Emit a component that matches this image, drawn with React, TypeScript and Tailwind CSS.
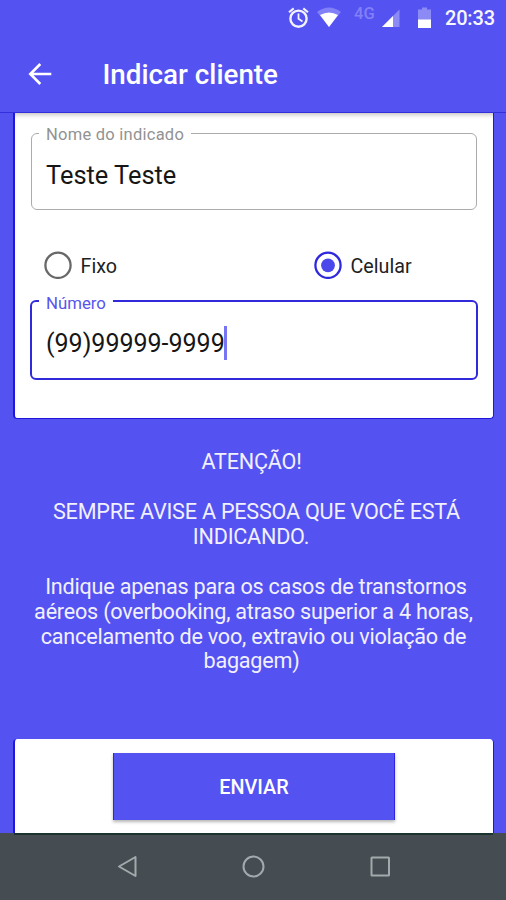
import React from "react";

function StatusBar() {
  return (
    <div className="flex h-[37px] w-full shrink-0 text-white">
      <svg width="506" height="37" viewBox="0 0 506 37" fill="none">
        <circle cx="298.5" cy="18.7" r="8.1" stroke="#f2f2ff" strokeWidth="2.4" />
        <path d="M298.5 13.5v5.3l4 2.6" stroke="#f2f2ff" strokeWidth="1.8" />
        <path d="M289 12.2l4.7-3.8M308 12.2l-4.7-3.8" stroke="#f2f2ff" strokeWidth="2.1" />
        <path d="M317 12Q329 3 341 12L329 27Z" fill="#8280f7" />
        <path d="M320 15Q329 10 338 15L329 27Z" fill="#fff" />
        <path d="M399.5 9.5V27H382Z" fill="#8c8bf6" />
        <path d="M393 16V27H382Z" fill="#fff" />
        <path d="M418 9.5h4V7.5h5v2h4V20h-13Z" fill="#8c8bf6" />
        <path d="M418 19.5h13V28h-13Z" fill="#fff" />
        <text x="354" y="19" fill="#8280f7" fontFamily="Roboto, sans-serif" fontSize="16.5" fontWeight="500">4G</text>
        <text x="445" y="25" fill="#f7f7ff" fontFamily="Roboto, sans-serif" fontSize="20" fontWeight="500" textLength="50">20:33</text>
      </svg>
    </div>
  );
}

function Header() {
  return (
    <header className="flex h-[75px] shrink-0 items-center pl-[28px]">
      <svg className="-mt-[2px]" width="24" height="24" viewBox="0 0 24 24" fill="none" stroke="white" strokeWidth="2.6">
        <path d="M23.3 12H2.5M12.3 2L2.3 12l10 10" />
      </svg>
      <h1 className="ml-[50.5px] text-[27.8px] font-medium leading-[32px] text-white">Indicar cliente</h1>
    </header>
  );
}

function Radio({ label, checked = false }: { label: string; checked?: boolean }) {
  return (
    <div className="flex w-[270px] shrink-0 items-center">
      <svg width="28" height="28" viewBox="0 0 28 28" fill="none">
        <circle cx="14" cy="14.3" r="12.6" stroke={checked ? "#2f28dc" : "#686868"} strokeWidth="2.3" />
        {checked && <circle cx="14" cy="14.3" r="6.9" fill="#4a48eb" />}
      </svg>
      <span className="ml-[8.5px] mt-[3px] text-[19.7px] leading-6 text-[#222]">{label}</span>
    </div>
  );
}

export default function App() {
  return (
    <div className="flex h-[900px] w-[506px] flex-col overflow-hidden bg-[#5552f2] font-[Roboto,sans-serif]">
      <StatusBar />
      <Header />
      <div className="h-px shrink-0 bg-[#342fdc]" />
      <section className="ml-[13px] mr-[12px] flex h-[306px] shrink-0 flex-col rounded-b-[4px] border-b border-l-2 border-r border-[#2017db] bg-white px-[15px] shadow-[inset_0_5px_4px_-3px_#c9c5c5]">
        <fieldset className="mx-px mt-[10px] h-[87px] rounded-[6px] border-[1.5px] border-[#ababab] pl-[7px]">
          <legend className="h-[20px] px-[7px] text-[16.5px] leading-[23px] tracking-[0.25px] text-[#929292]">Nome do indicado</legend>
          <p className="pl-[7px] pt-[17px] text-[25.4px] leading-[30px] text-[#161616]">Teste Teste</p>
        </fieldset>
        <div className="ml-[14px] mt-[41px] flex h-[28px] items-center">
          <Radio label="Fixo" />
          <Radio label="Celular" checked />
        </div>
        <fieldset className="mt-[12px] h-[89px] rounded-[6px] border-2 border-[#302adb] pl-[7px]">
          <legend className="h-[20px] px-[7px] text-[16.8px] leading-[25px] text-[#5855ed]">Número</legend>
          <div className="flex items-center pl-[7px] pt-[14px]">
            <p className="pt-[2px] text-[25px] leading-[34px] text-[#161616]">(99)99999-9999</p>
            <span className="-ml-px h-[34px] w-[3px] bg-[#7875f3]" />
          </div>
        </fieldset>
      </section>
      <section className="mt-[31px] h-[289px] shrink-0 text-center text-[21.6px] leading-[24.9px] tracking-[-0.22px] text-[#f1f0ff]">
        <p className="pr-[3px]">ATENÇÃO!</p>
        <p className="mt-[25px]"><span className="pl-[7px]">SEMPRE AVISE A PESSOA QUE VOCÊ ESTÁ</span><br /><span className="pr-[4px]">INDICANDO.</span></p>
        <p className="mt-[25px]"><span className="pl-[6px]">Indique apenas para os casos de transtornos</span><br /><span className="pl-px">aéreos (overbooking, atraso superior a 4 horas,</span><br /><span className="pl-px">cancelamento de voo, extravio ou violação de</span><br /><span className="pr-[3px]">bagagem)</span></p>
      </section>
      <section className="ml-[13px] mr-[12px] flex h-[94px] shrink-0 justify-center rounded-t-[4px] border-l-2 border-r border-[#2017db] bg-white pt-[14px]">
        <button className="h-[67px] w-[282px] border-x border-[#2d24e4] bg-[#5552f2] pt-[3px] text-[19.8px] font-medium text-white shadow-[0_2px_3px_#b5b5b5]">ENVIAR</button>
      </section>
      <nav className="h-[67px] shrink-0 bg-[#454d52]">
        <div className="ml-[14px] mr-[13px] h-[2px] bg-[#1a342f]" />
        <svg width="506" height="65" viewBox="0 0 506 65" fill="none" stroke="#a3a9ac" strokeWidth="2" strokeLinejoin="round">
          <path d="M135.5 22v19L119 31.5Z" />
          <circle cx="253.5" cy="31.5" r="10" />
          <rect x="371.5" y="22.5" width="17.5" height="18" rx="0.5" />
        </svg>
      </nav>
    </div>
  );
}
